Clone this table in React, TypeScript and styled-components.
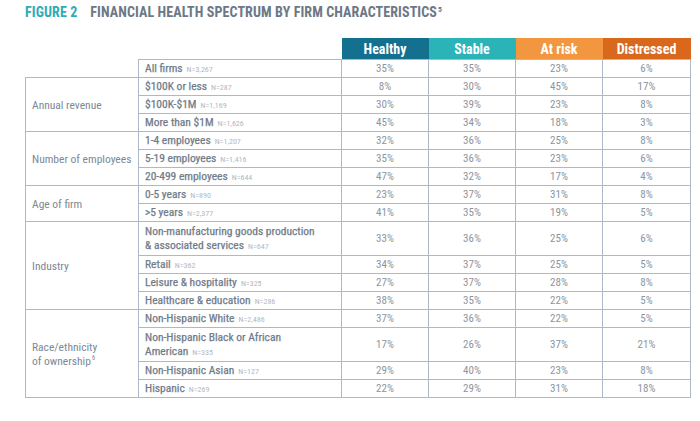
import React from 'react';
import styled, { createGlobalStyle } from 'styled-components';

const FONT = '"Roboto Condensed", "Liberation Sans Narrow", "DejaVu Sans Condensed", Roboto, sans-serif';

const GlobalStyle = createGlobalStyle`
  html, body {
    margin: 0;
    padding: 0;
    background: #ffffff;
  }
  body {
    font-family: ${FONT};
  }
`;

type Level = 'healthy' | 'stable' | 'risk' | 'distressed';

const headColors: Record<Level, string> = {
  healthy: '#13708f',
  stable: '#2bb4b8',
  risk: '#f2973f',
  distressed: '#da681c',
};

interface Item {
  label: string;
  n: string;
  values: string[];
  tall?: boolean;
  wrap?: string;
}

interface Group {
  name: React.ReactNode;
  items: Item[];
}

const groups: Group[] = [
  {
    name: 'Annual revenue',
    items: [
      { label: '$100K or less', n: 'N=287', values: ['8%', '30%', '45%', '17%'] },
      { label: '$100K-$1M', n: 'N=1,169', values: ['30%', '39%', '23%', '8%'] },
      { label: 'More than $1M', n: 'N=1,626', values: ['45%', '34%', '18%', '3%'] },
    ],
  },
  {
    name: 'Number of employees',
    items: [
      { label: '1-4 employees', n: 'N=1,207', values: ['32%', '36%', '25%', '8%'] },
      { label: '5-19 employees', n: 'N=1,416', values: ['35%', '36%', '23%', '6%'] },
      { label: '20-499 employees', n: 'N=644', values: ['47%', '32%', '17%', '4%'] },
    ],
  },
  {
    name: 'Age of firm',
    items: [
      { label: '0-5 years', n: 'N=890', values: ['23%', '37%', '31%', '8%'] },
      { label: '>5 years', n: 'N=2,377', values: ['41%', '35%', '19%', '5%'] },
    ],
  },
  {
    name: 'Industry',
    items: [
      {
        label: '& associated services',
        wrap: 'Non-manufacturing goods production',
        n: 'N=647',
        values: ['33%', '36%', '25%', '6%'],
        tall: true,
      },
      { label: 'Retail', n: 'N=362', values: ['34%', '37%', '25%', '5%'] },
      { label: 'Leisure & hospitality', n: 'N=325', values: ['27%', '37%', '28%', '8%'] },
      { label: 'Healthcare & education', n: 'N=286', values: ['38%', '35%', '22%', '5%'] },
    ],
  },
  {
    name: (
      <>
        Race/ethnicity
        <br />
        of ownership<Sup>6</Sup>
      </>
    ),
    items: [
      { label: 'Non-Hispanic White', n: 'N=2,486', values: ['37%', '36%', '22%', '5%'] },
      {
        label: 'American',
        wrap: 'Non-Hispanic Black or African',
        n: 'N=335',
        values: ['17%', '26%', '37%', '21%'],
        tall: true,
      },
      { label: 'Non-Hispanic Asian', n: 'N=127', values: ['29%', '40%', '23%', '8%'] },
      { label: 'Hispanic', n: 'N=269', values: ['22%', '29%', '31%', '18%'] },
    ],
  },
];

function Sup({ children }: { children: React.ReactNode }) {
  return <SupText>{children}</SupText>;
}

const SupText = styled.sup`
  font-size: 0.55em;
  line-height: 0;
  vertical-align: 0.7em;
  margin-left: 1px;
`;

const Page = styled.div`
  width: 700px;
  height: 421px;
  padding: 4px 0 0 25px;
  box-sizing: border-box;
  font-family: ${FONT};
`;

const Title = styled.h1`
  margin: 0 0 18px;
  font-size: 14px;
  line-height: 16px;
  font-weight: 700;
  color: #6c7886;
  letter-spacing: 0.1px;
  display: flex;
  gap: 13px;
`;

const FigureNo = styled.span`
  color: #2eabb6;
`;

const Table = styled.table`
  border-collapse: collapse;
  table-layout: fixed;
  width: 665px;
`;

const Cell = styled.td`
  border: 1px solid #aeb8c8;
  padding: 0 6px;
  line-height: 14px;
  font-size: 11.5px;
  color: #7d8895;
  vertical-align: middle;
`;

const Blank = styled.td`
  border: none;
  padding: 0;
`;

const Head = styled.th<{ $level: Level }>`
  background: ${({ $level }) => headColors[$level]};
  color: #ffffff;
  font-size: 14px;
  font-weight: 700;
  height: 21px;
  padding: 0;
  border: none;
  text-align: center;
  vertical-align: middle;
`;

const Row = styled.tr<{ $tall?: boolean }>`
  height: ${({ $tall }) => ($tall ? '34px' : '18px')};
`;

const CategoryCell = styled(Cell)`
  font-weight: 400;
`;

const ItemCell = styled(Cell)`
  font-weight: 400;
  color: #6f7b89;
  white-space: nowrap;
  -webkit-text-stroke: 0.25px #6f7b89;
`;

const Count = styled.span`
  font-size: 8px;
  font-weight: 400;
  color: #b1b8c2;
  margin-left: 4px;
  -webkit-text-stroke: 0;
`;

const Value = styled(Cell)`
  text-align: center;
  font-size: 11px;
  color: #8c95a0;
`;

const levels: Level[] = ['healthy', 'stable', 'risk', 'distressed'];
const levelNames = ['Healthy', 'Stable', 'At risk', 'Distressed'];

export default function App() {
  return (
    <>
      <GlobalStyle />
      <Page>
        <Title>
          <FigureNo>FIGURE 2</FigureNo>
          <span>
            FINANCIAL HEALTH SPECTRUM BY FIRM CHARACTERISTICS<Sup>5</Sup>
          </span>
        </Title>
        <Table>
          <colgroup>
            <col style={{ width: 113 }} />
            <col style={{ width: 203 }} />
            <col style={{ width: 87 }} />
            <col style={{ width: 87 }} />
            <col style={{ width: 87 }} />
            <col style={{ width: 88 }} />
          </colgroup>
          <thead>
            <tr>
              <Blank />
              <Blank />
              {levels.map((l, i) => (
                <Head key={l} $level={l}>
                  {levelNames[i]}
                </Head>
              ))}
            </tr>
          </thead>
          <tbody>
            <Row>
              <Blank />
              <ItemCell>
                All firms<Count>N=3,267</Count>
              </ItemCell>
              {['35%', '35%', '23%', '6%'].map((v, i) => (
                <Value key={i}>{v}</Value>
              ))}
            </Row>
            {groups.map((g, gi) =>
              g.items.map((it, ii) => (
                <Row key={`${gi}-${ii}`} $tall={it.tall}>
                  {ii === 0 && <CategoryCell rowSpan={g.items.length}>{g.name}</CategoryCell>}
                  <ItemCell>
                    {it.wrap && (
                      <>
                        {it.wrap}
                        <br />
                      </>
                    )}
                    {it.label}
                    <Count>{it.n}</Count>
                  </ItemCell>
                  {it.values.map((v, i) => (
                    <Value key={i}>{v}</Value>
                  ))}
                </Row>
              ))
            )}
          </tbody>
        </Table>
      </Page>
    </>
  );
}
